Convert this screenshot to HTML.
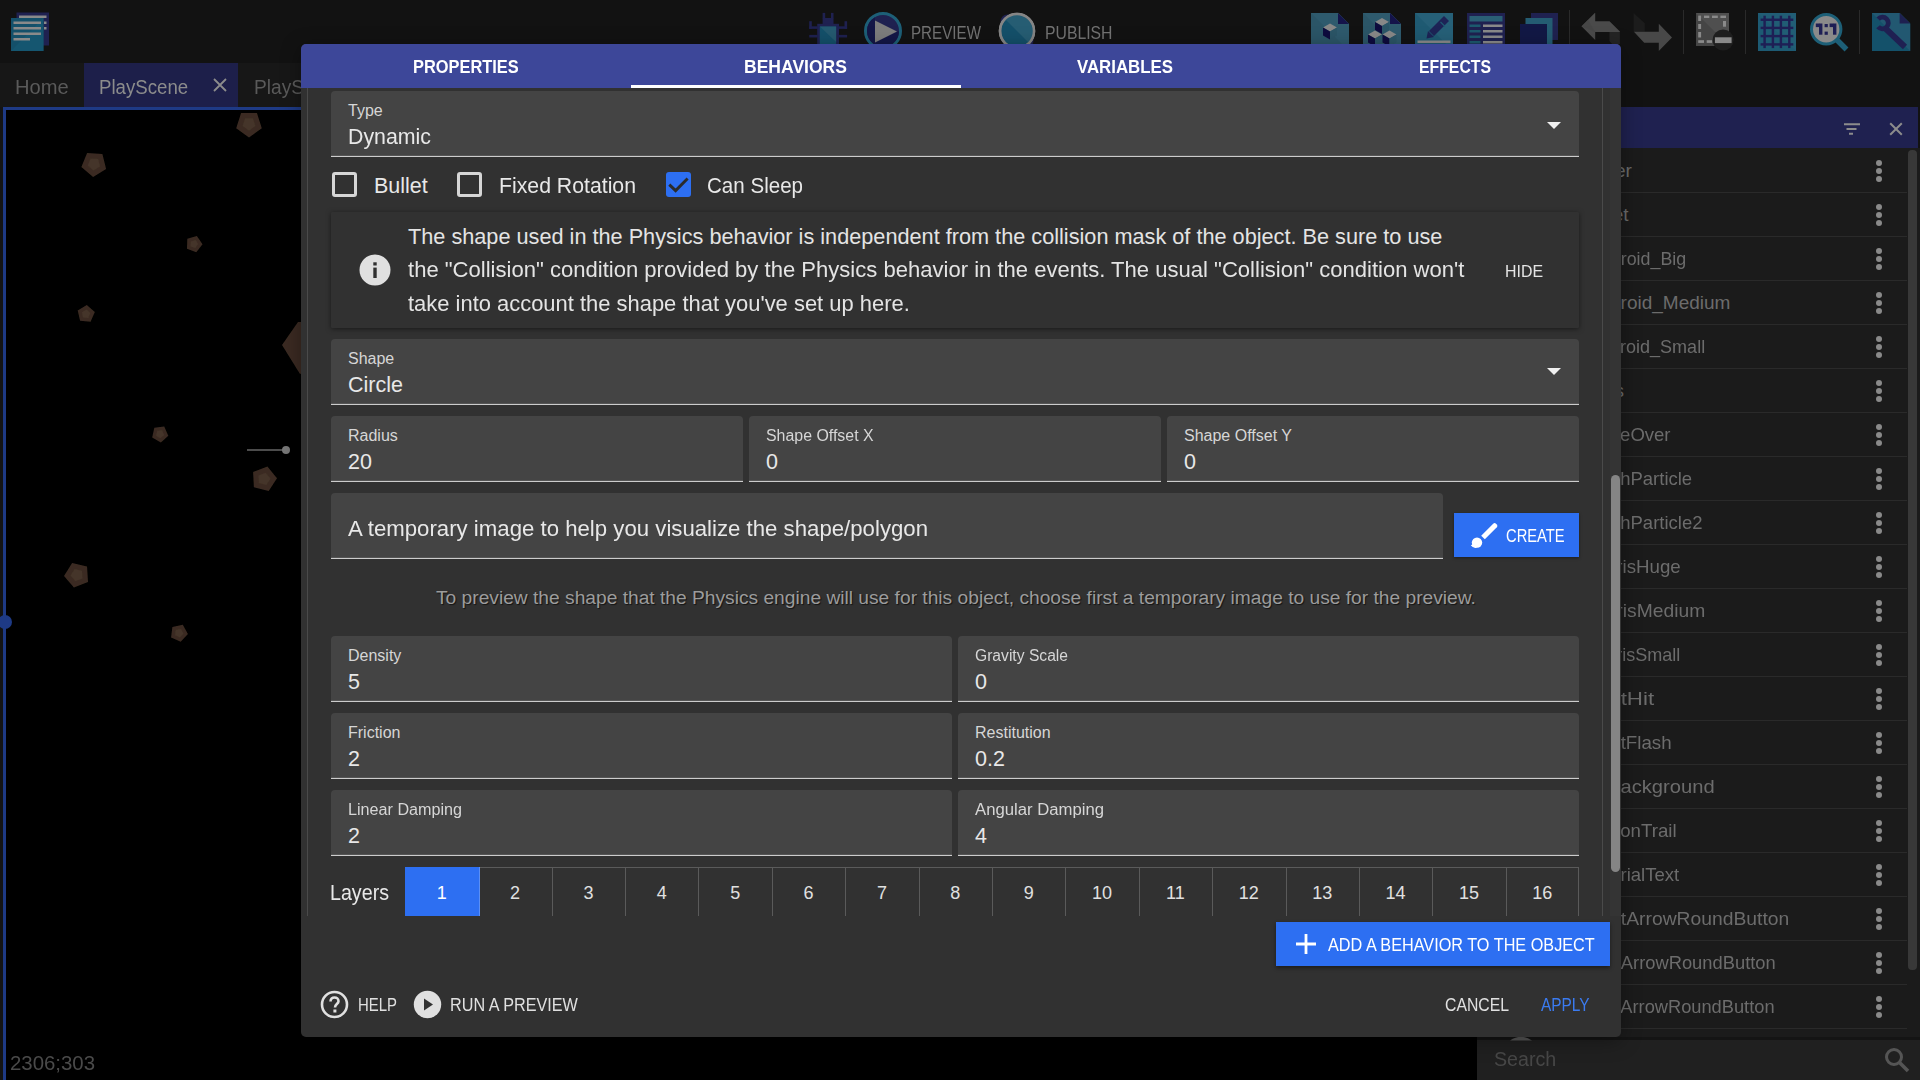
<!DOCTYPE html><html><head><meta charset="utf-8"><title>GDevelop</title><style>*{margin:0;padding:0;box-sizing:border-box}
html,body{width:1920px;height:1080px;overflow:hidden;background:#121212;font-family:"Liberation Sans",sans-serif}
.r{position:absolute}
.t{position:absolute;white-space:nowrap}
</style></head><body><div class="r" style="left:0px;top:63px;width:1477px;height:44px;background:#171717;"></div><div class="r" style="left:84px;top:63px;width:154px;height:44px;background:#1d1f4a;"></div><div class="t" style="left:15.00px;top:75.50px;font-size:20.00px;line-height:22.34px;color:#5a5a5a;transform:scaleX(1.0066);transform-origin:0 0;">Home</div><div class="t" style="left:99.00px;top:75.50px;font-size:20.00px;line-height:22.34px;color:#8c8c8c;transform:scaleX(0.9329);transform-origin:0 0;">PlayScene</div><div class="t" style="left:254.00px;top:75.50px;font-size:20.00px;line-height:22.34px;color:#5a5a5a;transform:scaleX(0.9570);transform-origin:0 0;">PlayS</div><svg class="r" style="left:212px;top:77px" width="16" height="16" viewBox="0 0 16 16"><path d="M2 2L14 14M14 2L2 14" stroke="#8c8c8c" stroke-width="1.8"/></svg><div class="r" style="left:0px;top:107px;width:1477px;height:973px;background:#141414;"></div><div class="r" style="left:3px;top:107px;width:1474px;height:973px;background:#000;"></div><div class="r" style="left:3px;top:107px;width:1474px;height:3px;background:#1e3a85;"></div><div class="r" style="left:3px;top:107px;width:3px;height:973px;background:#1e3a85;"></div><svg class="r" style="left:0;top:0" width="1477" height="1080"><defs><filter id="bl"><feGaussianBlur stdDeviation="0.5"/></filter></defs><g filter="url(#bl)"><polygon points="256.9,113.1 261.8,128.2 249.0,137.5 236.2,128.2 241.1,113.1" fill="#3b2c22"/><polygon points="253.0,118.5 255.4,126.1 249.0,130.8 242.6,126.1 245.0,118.5" fill="#45342a"/><polygon points="102.4,154.0 106.1,168.9 93.1,177.0 81.4,167.1 87.1,153.0" fill="#3b2c22"/><polygon points="98.2,159.0 100.0,166.4 93.5,170.5 87.7,165.6 90.6,158.5" fill="#45342a"/><polygon points="196.9,236.0 202.5,244.3 196.3,252.2 187.0,248.8 187.3,238.8" fill="#3b2c22"/><polygon points="195.5,240.0 198.2,244.1 195.2,248.1 190.5,246.4 190.7,241.4" fill="#45342a"/><polygon points="86.8,305.0 94.8,312.0 90.6,321.7 80.1,320.8 77.7,310.5" fill="#3b2c22"/><polygon points="86.4,309.5 90.4,313.0 88.3,317.9 83.0,317.4 81.9,312.2" fill="#45342a"/><polygon points="164.2,426.6 168.3,435.8 160.9,442.5 152.2,437.5 154.3,427.7" fill="#3b2c22"/><polygon points="162.1,430.3 164.2,434.9 160.4,438.2 156.1,435.7 157.2,430.8" fill="#45342a"/><polygon points="267.4,466.4 277.0,478.3 268.7,491.1 253.9,487.2 253.1,471.9" fill="#3b2c22"/><polygon points="265.7,472.7 270.5,478.7 266.3,485.1 258.9,483.1 258.5,475.5" fill="#45342a"/><polygon points="87.0,566.6 88.0,581.9 73.9,587.6 64.0,575.9 72.1,562.9" fill="#3b2c22"/><polygon points="82.0,570.8 82.5,578.4 75.4,581.3 70.5,575.5 74.6,569.0" fill="#45342a"/><polygon points="182.8,624.8 187.9,634.1 180.7,641.8 171.1,637.4 172.4,626.9" fill="#3b2c22"/><polygon points="180.9,628.9 183.5,633.5 179.9,637.4 175.1,635.2 175.7,629.9" fill="#45342a"/><polygon points="282,345 298,322 330,322 340,360 300,374" fill="#3b2c22"/><line x1="247" y1="450" x2="285" y2="450" stroke="#666" stroke-width="1.5"/><circle cx="286" cy="450" r="4" fill="#777"/></g><circle cx="5" cy="622" r="7" fill="#1e3a85"/></svg><div class="t" style="left:10.00px;top:1051.90px;font-size:20.00px;line-height:22.34px;color:#4a4a4a;transform:scaleX(1.0191);transform-origin:0 0;">2306;303</div><div class="r" style="left:1477px;top:107px;width:441px;height:41px;background:#1f2150;"></div><div class="r" style="left:1477px;top:148px;width:443px;height:892px;background:#1b1b1b;"></div><div class="r" style="left:1477px;top:1037px;width:443px;height:3px;background:#141414;"></div><div class="r" style="left:1477px;top:1040px;width:443px;height:40px;background:#202020;"></div><svg class="r" style="left:1508px;top:1036px" width="26" height="5" viewBox="0 0 26 5"><path d="M2 4.5Q13 -3 24 4.5Z" fill="#555"/></svg><div class="t" style="left:1494.00px;top:1047.90px;font-size:20.00px;line-height:22.34px;color:#474747;transform:scaleX(0.9824);transform-origin:0 0;">Search</div><svg class="r" style="left:1884px;top:1047px" width="26" height="26" viewBox="0 0 26 26"><circle cx="10" cy="10" r="7.5" fill="none" stroke="#555" stroke-width="3"/><path d="M15.5 15.5L24 24" stroke="#555" stroke-width="3.5"/></svg><svg class="r" style="left:1843px;top:122px" width="18" height="16" viewBox="0 0 18 16"><path d="M1 2.2H17M3.5 7H13.5M6 11.7H10" stroke="#8c8c8c" stroke-width="2"/></svg><svg class="r" style="left:1889px;top:122px" width="14" height="14" viewBox="0 0 14 14"><path d="M1.2 1.2L12.8 12.8M12.8 1.2L1.2 12.8" stroke="#8c8c8c" stroke-width="2"/></svg><div class="t" style="left:1577.95px;top:159.81px;font-size:19.00px;line-height:21.22px;color:#6c6c6c;">Player</div><div class="r" style="left:1477px;top:192px;width:430px;height:1px;background:#2a2a2a;"></div><svg class="r" style="left:1875px;top:160px" width="8" height="22" viewBox="0 0 8 22"><circle cx="4" cy="3" r="3" fill="#8a8a8a"/><circle cx="4" cy="11" r="3" fill="#8a8a8a"/><circle cx="4" cy="19" r="3" fill="#8a8a8a"/></svg><div class="t" style="left:1581.07px;top:203.81px;font-size:19.00px;line-height:21.22px;color:#6c6c6c;">Bullet</div><div class="r" style="left:1477px;top:236px;width:430px;height:1px;background:#2a2a2a;"></div><svg class="r" style="left:1875px;top:204px" width="8" height="22" viewBox="0 0 8 22"><circle cx="4" cy="3" r="3" fill="#8a8a8a"/><circle cx="4" cy="11" r="3" fill="#8a8a8a"/><circle cx="4" cy="19" r="3" fill="#8a8a8a"/></svg><div class="t" style="left:1584.78px;top:247.81px;font-size:19.00px;line-height:21.22px;color:#6c6c6c;transform:scaleX(0.9397);transform-origin:0 0;">Asteroid_Big</div><div class="r" style="left:1477px;top:280px;width:430px;height:1px;background:#2a2a2a;"></div><svg class="r" style="left:1875px;top:248px" width="8" height="22" viewBox="0 0 8 22"><circle cx="4" cy="3" r="3" fill="#8a8a8a"/><circle cx="4" cy="11" r="3" fill="#8a8a8a"/><circle cx="4" cy="19" r="3" fill="#8a8a8a"/></svg><div class="t" style="left:1582.59px;top:291.81px;font-size:19.00px;line-height:21.22px;color:#6c6c6c;">Asteroid_Medium</div><div class="r" style="left:1477px;top:324px;width:430px;height:1px;background:#2a2a2a;"></div><svg class="r" style="left:1875px;top:292px" width="8" height="22" viewBox="0 0 8 22"><circle cx="4" cy="3" r="3" fill="#8a8a8a"/><circle cx="4" cy="11" r="3" fill="#8a8a8a"/><circle cx="4" cy="19" r="3" fill="#8a8a8a"/></svg><div class="t" style="left:1584.45px;top:335.81px;font-size:19.00px;line-height:21.22px;color:#6c6c6c;transform:scaleX(0.9481);transform-origin:0 0;">Asteroid_Small</div><div class="r" style="left:1477px;top:368px;width:430px;height:1px;background:#2a2a2a;"></div><svg class="r" style="left:1875px;top:336px" width="8" height="22" viewBox="0 0 8 22"><circle cx="4" cy="3" r="3" fill="#8a8a8a"/><circle cx="4" cy="11" r="3" fill="#8a8a8a"/><circle cx="4" cy="19" r="3" fill="#8a8a8a"/></svg><div class="t" style="left:1579.65px;top:379.81px;font-size:19.00px;line-height:21.22px;color:#6c6c6c;">Lives</div><div class="r" style="left:1477px;top:412px;width:430px;height:1px;background:#2a2a2a;"></div><svg class="r" style="left:1875px;top:380px" width="8" height="22" viewBox="0 0 8 22"><circle cx="4" cy="3" r="3" fill="#8a8a8a"/><circle cx="4" cy="11" r="3" fill="#8a8a8a"/><circle cx="4" cy="19" r="3" fill="#8a8a8a"/></svg><div class="t" style="left:1580.39px;top:423.81px;font-size:19.00px;line-height:21.22px;color:#6c6c6c;transform:scaleX(0.9742);transform-origin:0 0;">GameOver</div><div class="r" style="left:1477px;top:456px;width:430px;height:1px;background:#2a2a2a;"></div><svg class="r" style="left:1875px;top:424px" width="8" height="22" viewBox="0 0 8 22"><circle cx="4" cy="3" r="3" fill="#8a8a8a"/><circle cx="4" cy="11" r="3" fill="#8a8a8a"/><circle cx="4" cy="19" r="3" fill="#8a8a8a"/></svg><div class="t" style="left:1573.26px;top:467.81px;font-size:19.00px;line-height:21.22px;color:#6c6c6c;transform:scaleX(0.9727);transform-origin:0 0;">SmashParticle</div><div class="r" style="left:1477px;top:500px;width:430px;height:1px;background:#2a2a2a;"></div><svg class="r" style="left:1875px;top:468px" width="8" height="22" viewBox="0 0 8 22"><circle cx="4" cy="3" r="3" fill="#8a8a8a"/><circle cx="4" cy="11" r="3" fill="#8a8a8a"/><circle cx="4" cy="19" r="3" fill="#8a8a8a"/></svg><div class="t" style="left:1573.25px;top:511.81px;font-size:19.00px;line-height:21.22px;color:#6c6c6c;transform:scaleX(0.9730);transform-origin:0 0;">SmashParticle2</div><div class="r" style="left:1477px;top:544px;width:430px;height:1px;background:#2a2a2a;"></div><svg class="r" style="left:1875px;top:512px" width="8" height="22" viewBox="0 0 8 22"><circle cx="4" cy="3" r="3" fill="#8a8a8a"/><circle cx="4" cy="11" r="3" fill="#8a8a8a"/><circle cx="4" cy="19" r="3" fill="#8a8a8a"/></svg><div class="t" style="left:1581.98px;top:555.80px;font-size:19.00px;line-height:21.22px;color:#6c6c6c;transform:scaleX(0.9841);transform-origin:0 0;">DebrisHuge</div><div class="r" style="left:1477px;top:588px;width:430px;height:1px;background:#2a2a2a;"></div><svg class="r" style="left:1875px;top:556px" width="8" height="22" viewBox="0 0 8 22"><circle cx="4" cy="3" r="3" fill="#8a8a8a"/><circle cx="4" cy="11" r="3" fill="#8a8a8a"/><circle cx="4" cy="19" r="3" fill="#8a8a8a"/></svg><div class="t" style="left:1580.71px;top:599.80px;font-size:19.00px;line-height:21.22px;color:#6c6c6c;transform:scaleX(1.0148);transform-origin:0 0;">DebrisMedium</div><div class="r" style="left:1477px;top:632px;width:430px;height:1px;background:#2a2a2a;"></div><svg class="r" style="left:1875px;top:600px" width="8" height="22" viewBox="0 0 8 22"><circle cx="4" cy="3" r="3" fill="#8a8a8a"/><circle cx="4" cy="11" r="3" fill="#8a8a8a"/><circle cx="4" cy="19" r="3" fill="#8a8a8a"/></svg><div class="t" style="left:1583.36px;top:643.80px;font-size:19.00px;line-height:21.22px;color:#6c6c6c;transform:scaleX(0.9505);transform-origin:0 0;">DebrisSmall</div><div class="r" style="left:1477px;top:676px;width:430px;height:1px;background:#2a2a2a;"></div><svg class="r" style="left:1875px;top:644px" width="8" height="22" viewBox="0 0 8 22"><circle cx="4" cy="3" r="3" fill="#8a8a8a"/><circle cx="4" cy="11" r="3" fill="#8a8a8a"/><circle cx="4" cy="19" r="3" fill="#8a8a8a"/></svg><div class="t" style="left:1570.84px;top:687.80px;font-size:19.00px;line-height:21.22px;color:#6c6c6c;transform:scaleX(1.1754);transform-origin:0 0;">BulletHit</div><div class="r" style="left:1477px;top:720px;width:430px;height:1px;background:#2a2a2a;"></div><svg class="r" style="left:1875px;top:688px" width="8" height="22" viewBox="0 0 8 22"><circle cx="4" cy="3" r="3" fill="#8a8a8a"/><circle cx="4" cy="11" r="3" fill="#8a8a8a"/><circle cx="4" cy="19" r="3" fill="#8a8a8a"/></svg><div class="t" style="left:1578.85px;top:731.80px;font-size:19.00px;line-height:21.22px;color:#6c6c6c;transform:scaleX(0.9858);transform-origin:0 0;">BulletFlash</div><div class="r" style="left:1477px;top:764px;width:430px;height:1px;background:#2a2a2a;"></div><svg class="r" style="left:1875px;top:732px" width="8" height="22" viewBox="0 0 8 22"><circle cx="4" cy="3" r="3" fill="#8a8a8a"/><circle cx="4" cy="11" r="3" fill="#8a8a8a"/><circle cx="4" cy="19" r="3" fill="#8a8a8a"/></svg><div class="t" style="left:1607.04px;top:775.80px;font-size:19.00px;line-height:21.22px;color:#6c6c6c;transform:scaleX(1.0618);transform-origin:0 0;">Background</div><div class="r" style="left:1477px;top:808px;width:430px;height:1px;background:#2a2a2a;"></div><svg class="r" style="left:1875px;top:776px" width="8" height="22" viewBox="0 0 8 22"><circle cx="4" cy="3" r="3" fill="#8a8a8a"/><circle cx="4" cy="11" r="3" fill="#8a8a8a"/><circle cx="4" cy="19" r="3" fill="#8a8a8a"/></svg><div class="t" style="left:1588.31px;top:819.80px;font-size:19.00px;line-height:21.22px;color:#6c6c6c;transform:scaleX(0.9831);transform-origin:0 0;">PotionTrail</div><div class="r" style="left:1477px;top:852px;width:430px;height:1px;background:#2a2a2a;"></div><svg class="r" style="left:1875px;top:820px" width="8" height="22" viewBox="0 0 8 22"><circle cx="4" cy="3" r="3" fill="#8a8a8a"/><circle cx="4" cy="11" r="3" fill="#8a8a8a"/><circle cx="4" cy="19" r="3" fill="#8a8a8a"/></svg><div class="t" style="left:1584.04px;top:863.80px;font-size:19.00px;line-height:21.22px;color:#6c6c6c;transform:scaleX(0.9771);transform-origin:0 0;">TutorialText</div><div class="r" style="left:1477px;top:896px;width:430px;height:1px;background:#2a2a2a;"></div><svg class="r" style="left:1875px;top:864px" width="8" height="22" viewBox="0 0 8 22"><circle cx="4" cy="3" r="3" fill="#8a8a8a"/><circle cx="4" cy="11" r="3" fill="#8a8a8a"/><circle cx="4" cy="19" r="3" fill="#8a8a8a"/></svg><div class="t" style="left:1593.68px;top:907.80px;font-size:19.00px;line-height:21.22px;color:#6c6c6c;transform:scaleX(1.0157);transform-origin:0 0;">LeftArrowRoundButton</div><div class="r" style="left:1477px;top:940px;width:430px;height:1px;background:#2a2a2a;"></div><svg class="r" style="left:1875px;top:908px" width="8" height="22" viewBox="0 0 8 22"><circle cx="4" cy="3" r="3" fill="#8a8a8a"/><circle cx="4" cy="11" r="3" fill="#8a8a8a"/><circle cx="4" cy="19" r="3" fill="#8a8a8a"/></svg><div class="t" style="left:1577.70px;top:951.80px;font-size:19.00px;line-height:21.22px;color:#6c6c6c;transform:scaleX(0.9650);transform-origin:0 0;">RightArrowRoundButton</div><div class="r" style="left:1477px;top:984px;width:430px;height:1px;background:#2a2a2a;"></div><svg class="r" style="left:1875px;top:952px" width="8" height="22" viewBox="0 0 8 22"><circle cx="4" cy="3" r="3" fill="#8a8a8a"/><circle cx="4" cy="11" r="3" fill="#8a8a8a"/><circle cx="4" cy="19" r="3" fill="#8a8a8a"/></svg><div class="t" style="left:1597.17px;top:995.80px;font-size:19.00px;line-height:21.22px;color:#6c6c6c;transform:scaleX(0.9606);transform-origin:0 0;">UpArrowRoundButton</div><div class="r" style="left:1477px;top:1028px;width:430px;height:1px;background:#2a2a2a;"></div><svg class="r" style="left:1875px;top:996px" width="8" height="22" viewBox="0 0 8 22"><circle cx="4" cy="3" r="3" fill="#8a8a8a"/><circle cx="4" cy="11" r="3" fill="#8a8a8a"/><circle cx="4" cy="19" r="3" fill="#8a8a8a"/></svg><div class="r" style="left:1908px;top:150px;width:9px;height:820px;background:#383838;border-radius:4px;"></div><svg class="r" style="left:10px;top:12px" width="40" height="40" viewBox="0 0 40 40"><rect x="6.5" y="0.5" width="32.5" height="33" fill="#1f2150"/><rect x="9" y="3.5" width="27.5" height="2.5" fill="#8a8a8a"/><rect x="34" y="9.5" width="2.5" height="2.5" fill="#8a8a8a"/><rect x="34" y="15" width="2.5" height="2.5" fill="#8a8a8a"/><rect x="1" y="6" width="32.5" height="33" fill="#14506a"/><path d="M33.5 6V39H1Z" fill="#155a75" opacity="0.6"/><rect x="3.5" y="9.5" width="27.5" height="2.5" fill="#8a8a8a"/><rect x="3.5" y="15" width="27.5" height="2.5" fill="#8a8a8a"/><rect x="3.5" y="20.5" width="27.5" height="2.5" fill="#8a8a8a"/><rect x="3.5" y="26" width="16.5" height="2.5" fill="#8a8a8a"/></svg><svg class="r" style="left:808px;top:12px" width="40" height="33" viewBox="0 0 40 33"><g fill="#1f2150"><rect x="14.6" y="0.9" width="2.6" height="5.5"/><rect x="23" y="0.9" width="2.5" height="5.5"/><rect x="14.6" y="6" width="10.9" height="6"/><rect x="9.2" y="11.8" width="21.8" height="22"/><rect x="1.2" y="9.2" width="2.6" height="7.7"/><rect x="1.2" y="14.3" width="8.5" height="2.6"/><rect x="36.5" y="9.2" width="2.6" height="7.7"/><rect x="30.5" y="14.3" width="8.6" height="2.6"/><rect x="1.2" y="22.9" width="8.5" height="2.6"/><rect x="30.5" y="22.9" width="8.6" height="2.6"/></g><rect x="11.8" y="14.6" width="16.3" height="19" fill="#14506a"/><path d="M11.8 14.6H28.1V30Z" fill="#255a70"/></svg><svg class="r" style="left:863px;top:11px" width="40" height="33" viewBox="0 0 40 33"><circle cx="20" cy="20" r="17.5" fill="#1f2150" stroke="#1d5f77" stroke-width="3"/><path d="M12 6.14A16 16 0 0 0 12 33.86Z" fill="#141747"/><path d="M12 31.5L36 20A16 16 0 0 1 12 33.86Z" fill="#141747"/><path d="M12 9.5L34 20.5L12 31.5Z" fill="#7d7d7d"/></svg><div class="t" style="left:911.00px;top:21.62px;font-size:19.20px;line-height:21.45px;color:#737373;transform:scaleX(0.7905);transform-origin:0 0;">PREVIEW</div><svg class="r" style="left:996px;top:10px" width="42" height="34" viewBox="0 0 42 34"><ellipse cx="21" cy="21" rx="19" ry="9" transform="rotate(45 21 21)" fill="none" stroke="#1f2150" stroke-width="3"/><circle cx="21" cy="21" r="17" fill="#14506a" stroke="#858585" stroke-width="2.5"/><path d="M9 9A17 17 0 0 1 33 33Z" fill="#265d73"/><circle cx="21" cy="21" r="17" fill="none" stroke="#858585" stroke-width="2.5"/><path d="M9 9L33 33" stroke="#1f2150" stroke-width="0" /></svg><div class="t" style="left:1045.00px;top:21.62px;font-size:19.20px;line-height:21.45px;color:#737373;transform:scaleX(0.8215);transform-origin:0 0;">PUBLISH</div><svg class="r" style="left:1311px;top:13px" width="38" height="38" viewBox="0 0 38 38"><path d="M0 0H27L38 11V38H0Z" fill="#2b5567"/><path d="M0 0H27L38 11V38Z" fill="#305d70" opacity="0.7"/><path d="M27 0L38 11H27Z" fill="#14134a"/><g transform="translate(12,14.5)"><path d="M7 -4L14 0L7 4L0 0Z" fill="#888"/><path d="M0 0L7 4V12L0 8Z" fill="#0e0b3e"/><path d="M7 4L14 0V8L7 12Z" fill="#2b5567"/></g></svg><svg class="r" style="left:1363px;top:13px" width="38" height="38" viewBox="0 0 38 38"><path d="M0 0H27L38 11V38H0Z" fill="#2b5567"/><path d="M0 0H27L38 11V38Z" fill="#305d70" opacity="0.7"/><path d="M27 0L38 11H27Z" fill="#14134a"/><g transform="translate(12,9)"><path d="M7 -4L14 0L7 4L0 0Z" fill="#888"/><path d="M0 0L7 4V12L0 8Z" fill="#0e0b3e"/><path d="M7 4L14 0V8L7 12Z" fill="#2b5567"/></g><g transform="translate(5,21.5)"><path d="M7 -4L14 0L7 4L0 0Z" fill="#888"/><path d="M0 0L7 4V12L0 8Z" fill="#0e0b3e"/><path d="M7 4L14 0V8L7 12Z" fill="#2b5567"/></g><g transform="translate(19.5,21.5)"><path d="M7 -4L14 0L7 4L0 0Z" fill="#888"/><path d="M0 0L7 4V12L0 8Z" fill="#0e0b3e"/><path d="M7 4L14 0V8L7 12Z" fill="#2b5567"/></g></svg><svg class="r" style="left:1415px;top:13px" width="38" height="38" viewBox="0 0 38 38"><rect width="38" height="38" fill="#1f5a72"/><path d="M0 0H38V38Z" fill="#29637a" opacity="0.7"/><path d="M16.5 20.5L31.5 5.5" stroke="#1d2356" stroke-width="7"/><path d="M11.5 25.5L13 18L19 24Z" fill="#1d2356"/><path d="M25.5 9L30 13.5" stroke="#1f5a72" stroke-width="1.3"/><rect x="2.5" y="27.5" width="33" height="2.5" fill="#8a8a8a"/></svg><svg class="r" style="left:1467px;top:13px" width="38" height="38" viewBox="0 0 38 38"><rect width="38" height="38" fill="#1f2150"/><rect x="2.5" y="3" width="33" height="5.5" fill="#2a5f74"/><rect x="2.5" y="11.5" width="11" height="2.5" fill="#1c5a6e"/><rect x="16" y="11.5" width="19.5" height="2.5" fill="#8a8a8a"/><rect x="2.5" y="17.0" width="11" height="2.5" fill="#1c5a6e"/><rect x="16" y="17.0" width="19.5" height="2.5" fill="#8a8a8a"/><rect x="2.5" y="22.5" width="11" height="2.5" fill="#1c5a6e"/><rect x="16" y="22.5" width="19.5" height="2.5" fill="#8a8a8a"/><rect x="2.5" y="28.0" width="11" height="2.5" fill="#1c5a6e"/><rect x="16" y="28.0" width="19.5" height="2.5" fill="#8a8a8a"/></svg><svg class="r" style="left:1520px;top:13px" width="38" height="38" viewBox="0 0 38 38"><rect x="11" y="0" width="27" height="27" fill="#1f2150"/><rect x="5.5" y="5" width="27" height="27" fill="#245c72"/><rect x="0" y="11" width="27" height="27" fill="#121845"/></svg><div class="r" style="left:1569px;top:10px;width:1px;height:34px;background:#2a2a2a;"></div><div class="r" style="left:1683px;top:10px;width:1px;height:44px;background:#2a2a2a;"></div><div class="r" style="left:1745px;top:10px;width:1px;height:44px;background:#2a2a2a;"></div><div class="r" style="left:1859px;top:10px;width:1px;height:44px;background:#2a2a2a;"></div><svg class="r" style="left:1581px;top:13px" width="40" height="32" viewBox="0 0 40 32"><path d="M28.5 19.1H38.9V31H31L28.5 28Z" fill="#242424"/><path d="M0.5 13.3L14.2 -0.4V8.2H28.5L38.9 18.5V19.1H14.2V27.1Z" fill="#4a4a4a"/><path d="M0.5 13.3L7 6.8L14 19.1Z" fill="#444" opacity="0.6"/></svg><svg class="r" style="left:1633px;top:12px" width="40" height="40" viewBox="0 0 40 40"><path d="M0.6 0.9L11.8 11.2V19.8H0.6Z" fill="#1c1c1c"/><path d="M0.9 19.8H25.8V11.8L39 25.5L25.8 39V30.7H11.2Z" fill="#484848"/></svg><svg class="r" style="left:1695px;top:12px" width="40" height="40" viewBox="0 0 40 40"><rect x="1" y="1" width="33" height="33" fill="#454545"/><path d="M1 1H34V34Z" fill="#4f4f4f"/><g fill="#8a8a8a"><rect x="9" y="3.6" width="5.3" height="2.4"/><rect x="17" y="3.6" width="5.8" height="2.4"/><rect x="25.4" y="3.6" width="5.6" height="2.4"/><rect x="3.2" y="3.6" width="2.9" height="5.4"/><rect x="3.2" y="12" width="2.9" height="5"/><rect x="3.2" y="20" width="2.9" height="5.5"/><rect x="3.2" y="28.2" width="5.8" height="2.7"/><rect x="11.7" y="28.2" width="5.3" height="2.7"/><rect x="28" y="9" width="3" height="5.7"/></g><circle cx="28.1" cy="28" r="10.5" fill="#1e1e1e"/><rect x="19.9" y="25.3" width="16.7" height="5.8" fill="#8a8a8a"/></svg><svg class="r" style="left:1757px;top:13px" width="40" height="40" viewBox="0 0 40 40"><rect x="1" y="0" width="38" height="38" fill="#1d5a73"/><path d="M1 0H39V38Z" fill="#245f76" opacity="0.6"/><rect x="6.40" y="2.7" width="2.4" height="32.4" fill="#1e1f55"/><rect x="14.70" y="2.7" width="2.4" height="32.4" fill="#1e1f55"/><rect x="22.70" y="2.7" width="2.4" height="32.4" fill="#1e1f55"/><rect x="31.10" y="2.7" width="2.4" height="32.4" fill="#1e1f55"/><rect x="3.6" y="5.55" width="32.7" height="2.4" fill="#1e1f55"/><rect x="3.6" y="13.70" width="32.7" height="2.4" fill="#1e1f55"/><rect x="3.6" y="21.90" width="32.7" height="2.4" fill="#1e1f55"/><rect x="3.6" y="30.20" width="32.7" height="2.4" fill="#1e1f55"/></svg><svg class="r" style="left:1809px;top:12px" width="42" height="42" viewBox="0 0 42 42"><path d="M27 27L37.5 37.5" stroke="#1d5f77" stroke-width="5.5"/><circle cx="17.2" cy="17.2" r="14.7" fill="#8a8a8a" stroke="#1d5f77" stroke-width="3"/><g fill="#1e1f55"><rect x="10" y="11.5" width="3.4" height="11.2"/><rect x="6.8" y="11.5" width="3.5" height="3.6"/><rect x="15.6" y="12" width="3.2" height="3.2"/><rect x="15.6" y="19.6" width="3.2" height="3.2"/><rect x="24" y="11.5" width="3.4" height="11.2"/><rect x="20.6" y="11.5" width="3.6" height="3.6"/></g></svg><svg class="r" style="left:1871px;top:12px" width="40" height="40" viewBox="0 0 40 40"><path d="M1 1H28.6L39.2 11.4V39H1Z" fill="#14516a"/><path d="M1 1H28.6L39.2 11.4V39Z" fill="#255a73" opacity="0.8"/><path d="M28.6 1L39.2 11.4H28.6Z" fill="#1e2050"/><path d="M7.19 7.12 A5.80 5.80 0 1 1 7.06 14.73" stroke="#1f2052" stroke-width="4.8" fill="none"/><path d="M14 16L34 35" stroke="#1f2052" stroke-width="6"/></svg><div class="r" style="left:301px;top:44px;width:1320px;height:993px;background:#313131;border-radius:5px;box-shadow:0 4px 20px rgba(0,0,0,0.35);"></div><div class="r" style="left:301px;top:44px;width:1320px;height:44px;background:#3d4799;border-radius:5px 5px 0 0;"></div><div class="t" style="left:413.02px;top:56.62px;font-size:18.10px;line-height:20.22px;color:#ffffff;font-weight:bold;transform:scaleX(0.9060);transform-origin:0 0;">PROPERTIES</div><div class="t" style="left:744.12px;top:56.62px;font-size:18.10px;line-height:20.22px;color:#ffffff;font-weight:bold;transform:scaleX(0.9692);transform-origin:0 0;">BEHAVIORS</div><div class="t" style="left:1077.38px;top:56.62px;font-size:18.10px;line-height:20.22px;color:#ffffff;font-weight:bold;transform:scaleX(0.9298);transform-origin:0 0;">VARIABLES</div><div class="t" style="left:1419.12px;top:56.62px;font-size:18.10px;line-height:20.22px;color:#ffffff;font-weight:bold;transform:scaleX(0.8732);transform-origin:0 0;">EFFECTS</div><div class="r" style="left:631px;top:85px;width:330px;height:3px;background:#ffffff;"></div><div class="r" style="left:307px;top:88px;width:1px;height:828px;background:#4a4a4a;"></div><div class="r" style="left:1602px;top:88px;width:1px;height:828px;background:#4a4a4a;"></div><div class="r" style="left:1610px;top:88px;width:11px;height:828px;background:#343434;"></div><div class="r" style="left:1611px;top:475px;width:9px;height:397px;background:#858585;border-radius:5px;"></div><div class="r" style="left:331px;top:91px;width:1248px;height:65px;background:#444444;border-radius:4px 4px 0 0;"></div><div class="r" style="left:331px;top:155px;width:1248px;height:1px;background:#555555;"></div><div class="r" style="left:331px;top:156px;width:1248px;height:1px;background:#cccccc;"></div><div class="t" style="left:348.00px;top:101.52px;font-size:16.00px;line-height:17.87px;color:#d6d6d6;">Type</div><div class="t" style="left:348.00px;top:125.04px;font-size:21.50px;line-height:24.02px;color:#e8e8e8;transform:scaleX(0.9925);transform-origin:0 0;">Dynamic</div><svg class="r" style="left:1547px;top:122px" width="14" height="7" viewBox="0 0 14 7"><path d="M0 0H14L7 7Z" fill="#f0f0f0"/></svg><svg class="r" style="left:332px;top:172px" width="25" height="25" viewBox="0 0 25 25"><rect x="1.5" y="1.5" width="22" height="22" rx="1.5" fill="none" stroke="#d6d6d6" stroke-width="3"/></svg><div class="t" style="left:374.00px;top:173.54px;font-size:21.50px;line-height:24.02px;color:#e8e8e8;">Bullet</div><svg class="r" style="left:457px;top:172px" width="25" height="25" viewBox="0 0 25 25"><rect x="1.5" y="1.5" width="22" height="22" rx="1.5" fill="none" stroke="#d6d6d6" stroke-width="3"/></svg><div class="t" style="left:499.00px;top:173.54px;font-size:21.50px;line-height:24.02px;color:#e8e8e8;transform:scaleX(0.9883);transform-origin:0 0;">Fixed Rotation</div><svg class="r" style="left:666px;top:172px" width="25" height="25" viewBox="0 0 25 25"><rect x="0" y="0" width="25" height="25" rx="3" fill="#2d6ff2"/><path d="M3.3 12.6L9.6 18.6L21.6 6.4" stroke="#2b2b2b" stroke-width="2.9" fill="none"/></svg><div class="t" style="left:707.00px;top:173.54px;font-size:21.50px;line-height:24.02px;color:#e8e8e8;transform:scaleX(0.9562);transform-origin:0 0;">Can Sleep</div><div class="r" style="left:331px;top:212px;width:1248px;height:116px;background:#313131;box-shadow:0 1px 5px rgba(0,0,0,0.5);border-radius:1px;"></div><svg class="r" style="left:359px;top:254px" width="32" height="32" viewBox="0 0 32 32"><circle cx="16" cy="16" r="15.5" fill="#e0e0e0"/><rect x="14.3" y="8.3" width="3.4" height="3.2" fill="#313131"/><rect x="14.3" y="13.6" width="3.4" height="10.4" fill="#313131"/></svg><div class="t" style="left:408.00px;top:225.36px;font-size:21.70px;line-height:24.24px;color:#e4e4e4;">The shape used in the Physics behavior is independent from the collision mask of the object. Be sure to use</div><div class="t" style="left:408.00px;top:258.06px;font-size:21.70px;line-height:24.24px;color:#e4e4e4;transform:scaleX(1.0170);transform-origin:0 0;">the &quot;Collision&quot; condition provided by the Physics behavior in the events. The usual &quot;Collision&quot; condition won&#x27;t</div><div class="t" style="left:408.00px;top:291.56px;font-size:21.70px;line-height:24.24px;color:#e4e4e4;transform:scaleX(1.0115);transform-origin:0 0;">take into account the shape that you&#x27;ve set up here.</div><div class="t" style="left:1505.00px;top:261.95px;font-size:17.40px;line-height:19.44px;color:#e4e4e4;transform:scaleX(0.9141);transform-origin:0 0;">HIDE</div><div class="r" style="left:331px;top:339px;width:1248px;height:65px;background:#444444;border-radius:4px 4px 0 0;"></div><div class="r" style="left:331px;top:403px;width:1248px;height:1px;background:#555555;"></div><div class="r" style="left:331px;top:404px;width:1248px;height:1px;background:#cccccc;"></div><div class="t" style="left:348.00px;top:349.52px;font-size:16.00px;line-height:17.87px;color:#d6d6d6;">Shape</div><div class="t" style="left:348.00px;top:373.04px;font-size:21.50px;line-height:24.02px;color:#e8e8e8;">Circle</div><svg class="r" style="left:1547px;top:368px" width="14" height="7" viewBox="0 0 14 7"><path d="M0 0H14L7 7Z" fill="#f0f0f0"/></svg><div class="r" style="left:331px;top:416px;width:412px;height:65px;background:#444444;border-radius:4px 4px 0 0;"></div><div class="r" style="left:331px;top:480px;width:412px;height:1px;background:#555555;"></div><div class="r" style="left:331px;top:481px;width:412px;height:1px;background:#cccccc;"></div><div class="t" style="left:348.00px;top:426.52px;font-size:16.00px;line-height:17.87px;color:#d6d6d6;">Radius</div><div class="t" style="left:348.00px;top:450.04px;font-size:21.50px;line-height:24.02px;color:#e8e8e8;">20</div><div class="r" style="left:749px;top:416px;width:412px;height:65px;background:#444444;border-radius:4px 4px 0 0;"></div><div class="r" style="left:749px;top:480px;width:412px;height:1px;background:#555555;"></div><div class="r" style="left:749px;top:481px;width:412px;height:1px;background:#cccccc;"></div><div class="t" style="left:766.00px;top:426.52px;font-size:16.00px;line-height:17.87px;color:#d6d6d6;transform:scaleX(0.9943);transform-origin:0 0;">Shape Offset X</div><div class="t" style="left:766.00px;top:450.04px;font-size:21.50px;line-height:24.02px;color:#e8e8e8;">0</div><div class="r" style="left:1167px;top:416px;width:412px;height:65px;background:#444444;border-radius:4px 4px 0 0;"></div><div class="r" style="left:1167px;top:480px;width:412px;height:1px;background:#555555;"></div><div class="r" style="left:1167px;top:481px;width:412px;height:1px;background:#cccccc;"></div><div class="t" style="left:1184.00px;top:426.52px;font-size:16.00px;line-height:17.87px;color:#d6d6d6;">Shape Offset Y</div><div class="t" style="left:1184.00px;top:450.04px;font-size:21.50px;line-height:24.02px;color:#e8e8e8;">0</div><div class="r" style="left:331px;top:493px;width:1112px;height:65px;background:#444444;border-radius:4px 4px 0 0;"></div><div class="r" style="left:331px;top:557px;width:1112px;height:1px;background:#555555;"></div><div class="r" style="left:331px;top:558px;width:1112px;height:1px;background:#cccccc;"></div><div class="t" style="left:348.00px;top:517.24px;font-size:21.50px;line-height:24.02px;color:#e8e8e8;transform:scaleX(1.0326);transform-origin:0 0;">A temporary image to help you visualize the shape/polygon</div><div class="r" style="left:1454px;top:513px;width:125px;height:44px;background:#2d6ff2;border-radius:0;box-shadow:0 1px 3px rgba(0,0,0,0.4);"></div><svg class="r" style="left:1469px;top:522px" width="30" height="28" viewBox="0 0 30 28"><path d="M12.2 13.7L24.2 1.7A2 2 0 0 1 27 1.7L27.8 2.5A2 2 0 0 1 27.8 5.3L15.8 17.3Z" fill="#fff"/><circle cx="8" cy="20.6" r="5.2" fill="#fff"/><path d="M1.8 23.2Q4.3 23 4.6 19L7.8 25.8Q4.2 26.6 1.8 23.2Z" fill="#fff"/></svg><div class="t" style="left:1506.00px;top:526.89px;font-size:17.80px;line-height:19.88px;color:#ffffff;transform:scaleX(0.8282);transform-origin:0 0;">CREATE</div><div class="t" style="left:436.00px;top:586.62px;font-size:19.20px;line-height:21.45px;color:#9c9c9c;text-shadow:1px 1px 1px rgba(0,0,0,0.6);">To preview the shape that the Physics engine will use for this object, choose first a temporary image to use for the preview.</div><div class="r" style="left:331px;top:636px;width:621px;height:65px;background:#444444;border-radius:4px 4px 0 0;"></div><div class="r" style="left:331px;top:700px;width:621px;height:1px;background:#555555;"></div><div class="r" style="left:331px;top:701px;width:621px;height:1px;background:#cccccc;"></div><div class="t" style="left:348.00px;top:646.52px;font-size:16.00px;line-height:17.87px;color:#d6d6d6;">Density</div><div class="t" style="left:348.00px;top:670.04px;font-size:21.50px;line-height:24.02px;color:#e8e8e8;">5</div><div class="r" style="left:958px;top:636px;width:621px;height:65px;background:#444444;border-radius:4px 4px 0 0;"></div><div class="r" style="left:958px;top:700px;width:621px;height:1px;background:#555555;"></div><div class="r" style="left:958px;top:701px;width:621px;height:1px;background:#cccccc;"></div><div class="t" style="left:975.00px;top:646.52px;font-size:16.00px;line-height:17.87px;color:#d6d6d6;transform:scaleX(0.9775);transform-origin:0 0;">Gravity Scale</div><div class="t" style="left:975.00px;top:670.04px;font-size:21.50px;line-height:24.02px;color:#e8e8e8;">0</div><div class="r" style="left:331px;top:713px;width:621px;height:65px;background:#444444;border-radius:4px 4px 0 0;"></div><div class="r" style="left:331px;top:777px;width:621px;height:1px;background:#555555;"></div><div class="r" style="left:331px;top:778px;width:621px;height:1px;background:#cccccc;"></div><div class="t" style="left:348.00px;top:723.52px;font-size:16.00px;line-height:17.87px;color:#d6d6d6;">Friction</div><div class="t" style="left:348.00px;top:747.04px;font-size:21.50px;line-height:24.02px;color:#e8e8e8;">2</div><div class="r" style="left:958px;top:713px;width:621px;height:65px;background:#444444;border-radius:4px 4px 0 0;"></div><div class="r" style="left:958px;top:777px;width:621px;height:1px;background:#555555;"></div><div class="r" style="left:958px;top:778px;width:621px;height:1px;background:#cccccc;"></div><div class="t" style="left:975.00px;top:723.52px;font-size:16.00px;line-height:17.87px;color:#d6d6d6;">Restitution</div><div class="t" style="left:975.00px;top:747.04px;font-size:21.50px;line-height:24.02px;color:#e8e8e8;">0.2</div><div class="r" style="left:331px;top:790px;width:621px;height:65px;background:#444444;border-radius:4px 4px 0 0;"></div><div class="r" style="left:331px;top:854px;width:621px;height:1px;background:#555555;"></div><div class="r" style="left:331px;top:855px;width:621px;height:1px;background:#cccccc;"></div><div class="t" style="left:348.00px;top:800.52px;font-size:16.00px;line-height:17.87px;color:#d6d6d6;transform:scaleX(1.0093);transform-origin:0 0;">Linear Damping</div><div class="t" style="left:348.00px;top:824.04px;font-size:21.50px;line-height:24.02px;color:#e8e8e8;">2</div><div class="r" style="left:958px;top:790px;width:621px;height:65px;background:#444444;border-radius:4px 4px 0 0;"></div><div class="r" style="left:958px;top:854px;width:621px;height:1px;background:#555555;"></div><div class="r" style="left:958px;top:855px;width:621px;height:1px;background:#cccccc;"></div><div class="t" style="left:975.00px;top:800.52px;font-size:16.00px;line-height:17.87px;color:#d6d6d6;transform:scaleX(1.0435);transform-origin:0 0;">Angular Damping</div><div class="t" style="left:975.00px;top:824.04px;font-size:21.50px;line-height:24.02px;color:#e8e8e8;">4</div><div class="t" style="left:330.00px;top:880.54px;font-size:21.50px;line-height:24.02px;color:#e8e8e8;transform:scaleX(0.9143);transform-origin:0 0;">Layers</div><div class="r" style="left:479px;top:867px;width:1100px;height:1px;background:#5a5a5a;"></div><div class="r" style="left:405px;top:867px;width:74px;height:49px;background:#2d6ff2;"></div><div class="r" style="left:479px;top:867px;width:1px;height:49px;background:#5b8ff5;"></div><div class="r" style="left:552px;top:867px;width:1px;height:49px;background:#5a5a5a;"></div><div class="r" style="left:625px;top:867px;width:1px;height:49px;background:#5a5a5a;"></div><div class="r" style="left:698px;top:867px;width:1px;height:49px;background:#5a5a5a;"></div><div class="r" style="left:772px;top:867px;width:1px;height:49px;background:#5a5a5a;"></div><div class="r" style="left:845px;top:867px;width:1px;height:49px;background:#5a5a5a;"></div><div class="r" style="left:919px;top:867px;width:1px;height:49px;background:#5a5a5a;"></div><div class="r" style="left:992px;top:867px;width:1px;height:49px;background:#5a5a5a;"></div><div class="r" style="left:1065px;top:867px;width:1px;height:49px;background:#5a5a5a;"></div><div class="r" style="left:1139px;top:867px;width:1px;height:49px;background:#5a5a5a;"></div><div class="r" style="left:1212px;top:867px;width:1px;height:49px;background:#5a5a5a;"></div><div class="r" style="left:1286px;top:867px;width:1px;height:49px;background:#5a5a5a;"></div><div class="r" style="left:1359px;top:867px;width:1px;height:49px;background:#5a5a5a;"></div><div class="r" style="left:1432px;top:867px;width:1px;height:49px;background:#5a5a5a;"></div><div class="r" style="left:1506px;top:867px;width:1px;height:49px;background:#5a5a5a;"></div><div class="r" style="left:1578px;top:867px;width:1px;height:49px;background:#5a5a5a;"></div><div class="t" style="left:436.68px;top:882.71px;font-size:18.00px;line-height:20.11px;color:#ffffff;">1</div><div class="t" style="left:510.06px;top:882.71px;font-size:18.00px;line-height:20.11px;color:#e0e0e0;">2</div><div class="t" style="left:583.43px;top:882.71px;font-size:18.00px;line-height:20.11px;color:#e0e0e0;">3</div><div class="t" style="left:656.81px;top:882.71px;font-size:18.00px;line-height:20.11px;color:#e0e0e0;">4</div><div class="t" style="left:730.18px;top:882.71px;font-size:18.00px;line-height:20.11px;color:#e0e0e0;">5</div><div class="t" style="left:803.56px;top:882.71px;font-size:18.00px;line-height:20.11px;color:#e0e0e0;">6</div><div class="t" style="left:876.93px;top:882.71px;font-size:18.00px;line-height:20.11px;color:#e0e0e0;">7</div><div class="t" style="left:950.31px;top:882.71px;font-size:18.00px;line-height:20.11px;color:#e0e0e0;">8</div><div class="t" style="left:1023.68px;top:882.71px;font-size:18.00px;line-height:20.11px;color:#e0e0e0;">9</div><div class="t" style="left:1092.05px;top:882.71px;font-size:18.00px;line-height:20.11px;color:#e0e0e0;">10</div><div class="t" style="left:1166.10px;top:882.71px;font-size:18.00px;line-height:20.11px;color:#e0e0e0;">11</div><div class="t" style="left:1238.80px;top:882.71px;font-size:18.00px;line-height:20.11px;color:#e0e0e0;">12</div><div class="t" style="left:1312.18px;top:882.71px;font-size:18.00px;line-height:20.11px;color:#e0e0e0;">13</div><div class="t" style="left:1385.55px;top:882.71px;font-size:18.00px;line-height:20.11px;color:#e0e0e0;">14</div><div class="t" style="left:1458.93px;top:882.71px;font-size:18.00px;line-height:20.11px;color:#e0e0e0;">15</div><div class="t" style="left:1532.30px;top:882.71px;font-size:18.00px;line-height:20.11px;color:#e0e0e0;">16</div><div class="r" style="left:1276px;top:922px;width:334px;height:44px;background:#2d6ff2;border-radius:0;box-shadow:0 2px 4px rgba(0,0,0,0.45);"></div><svg class="r" style="left:1296px;top:934px" width="20" height="20" viewBox="0 0 20 20"><path d="M10 0V20M0 10H20" stroke="#fff" stroke-width="2.8"/></svg><div class="t" style="left:1328.40px;top:935.89px;font-size:17.80px;line-height:19.88px;color:#ffffff;transform:scaleX(0.9130);transform-origin:0 0;">ADD A BEHAVIOR TO THE OBJECT</div><svg class="r" style="left:320px;top:990px" width="29" height="29" viewBox="0 0 29 29"><circle cx="14.5" cy="14.5" r="12.5" fill="none" stroke="#e0e0e0" stroke-width="2.6"/><path d="M10.5 11.5C10.5 9 12.3 7.5 14.5 7.5C16.7 7.5 18.5 9 18.5 11.2C18.5 14 15 14.2 15 17.5" fill="none" stroke="#e0e0e0" stroke-width="2.6"/><rect x="13.4" y="19.5" width="3" height="3" fill="#e0e0e0"/></svg><div class="t" style="left:357.50px;top:995.89px;font-size:17.80px;line-height:19.88px;color:#e0e0e0;transform:scaleX(0.8387);transform-origin:0 0;">HELP</div><svg class="r" style="left:413px;top:990px" width="29" height="29" viewBox="0 0 29 29"><circle cx="14.5" cy="14.5" r="13.7" fill="#e0e0e0"/><path d="M11 8.5L20 14.5L11 20.5Z" fill="#323232"/></svg><div class="t" style="left:450.00px;top:995.89px;font-size:17.80px;line-height:19.88px;color:#e0e0e0;transform:scaleX(0.9113);transform-origin:0 0;">RUN A PREVIEW</div><div class="t" style="left:1445.40px;top:995.89px;font-size:17.80px;line-height:19.88px;color:#e0e0e0;transform:scaleX(0.8863);transform-origin:0 0;">CANCEL</div><div class="t" style="left:1541.40px;top:995.89px;font-size:17.80px;line-height:19.88px;color:#3b7bf0;transform:scaleX(0.8668);transform-origin:0 0;">APPLY</div></body></html>
